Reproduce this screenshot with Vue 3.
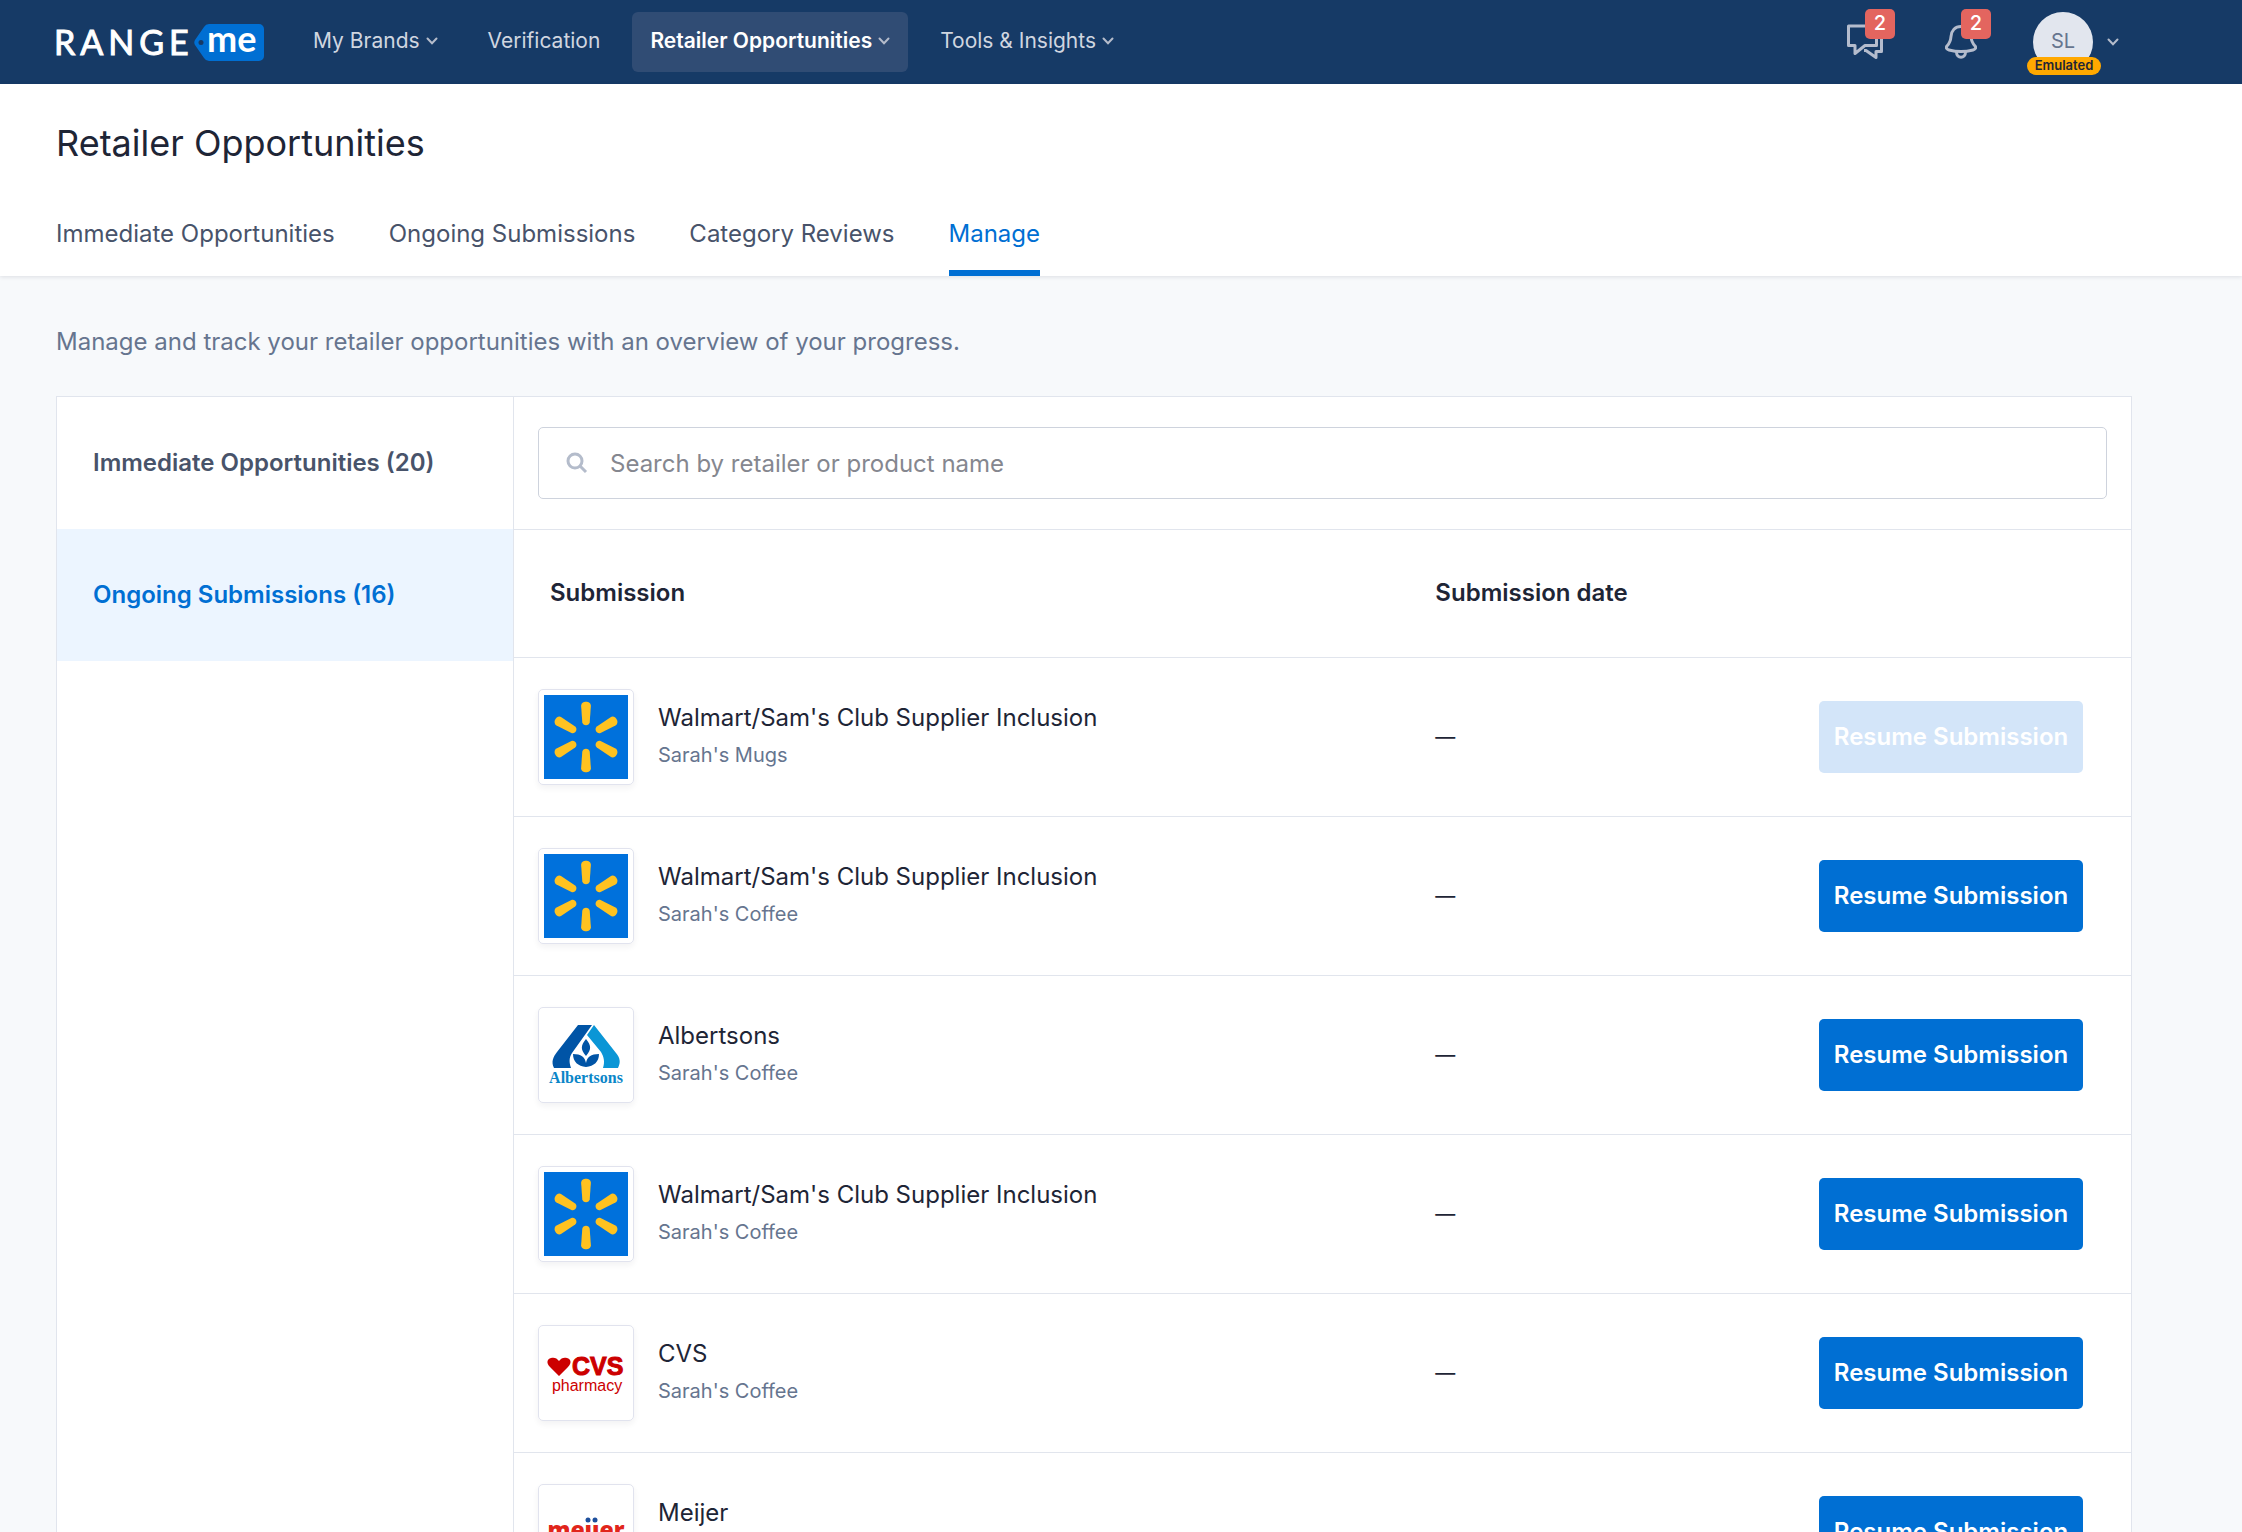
<script setup>
import { ref } from 'vue'

const search = ref('')

const navItems = [
  { label: 'My Brands', menu: true },
  { label: 'Verification', menu: false },
  { label: 'Retailer Opportunities', menu: true, active: true },
  { label: 'Tools & Insights', menu: true },
]

const tabs = ['Immediate Opportunities', 'Ongoing Submissions', 'Category Reviews', 'Manage']
const activeTab = 'Manage'

const sections = [
  { label: 'Immediate Opportunities', count: 20 },
  { label: 'Ongoing Submissions', count: 16, active: true },
]

const submissions = [
  { id: 1, name: "Walmart/Sam's Club Supplier Inclusion", brand: "Sarah's Mugs", logo: 'walmart', disabled: true },
  { id: 2, name: "Walmart/Sam's Club Supplier Inclusion", brand: "Sarah's Coffee", logo: 'walmart' },
  { id: 3, name: 'Albertsons', brand: "Sarah's Coffee", logo: 'albertsons' },
  { id: 4, name: "Walmart/Sam's Club Supplier Inclusion", brand: "Sarah's Coffee", logo: 'walmart' },
  { id: 5, name: 'CVS', brand: "Sarah's Coffee", logo: 'cvs' },
  { id: 6, name: 'Meijer', brand: "Sarah's Coffee", logo: 'meijer' },
]

const rays = [0, 60, 120, 180, 240, 300]
</script>

<template>
  <div class="page">
    <header class="topbar">
      <a class="brand" href="#" aria-label="RangeMe">
        <svg width="208" height="36" viewBox="0 0 208 36">
          <path d="M153 0h50a5 5 0 0 1 5 5v27a5 5 0 0 1-5 5h-50a6 6 0 0 1-5-3l-9-13a5 5 0 0 1 0-5l9-13a6 6 0 0 1 5-3z" fill="#006fd3" />
          <circle cx="145" cy="18.500" r="2.500" fill="#163a66" />
          <text class="brand-range" x="-2" y="31" fill="#fff">RANGE</text>
          <text class="brand-me" x="151" y="28" fill="#fff">me</text>
        </svg>
      </a>

      <nav class="nav">
        <a v-for="item in navItems" :key="item.label" href="#" class="nav-item" :class="{ active: item.active }">
          {{ item.label }}
          <svg v-if="item.menu" class="chevron" width="12" height="8" viewBox="0 0 12 8">
            <path d="M1.500 1.500 6 6.200l4.500-4.700" />
          </svg>
        </a>
      </nav>

      <div class="tools">
        <button class="tool" type="button" aria-label="Messages">
          <svg width="36" height="36" viewBox="0 0 36 36">
            <path d="M1.500 2h28v19.500H18l-10 8v-8H1.500z" />
            <path d="M34.500 12v15.500h-5.500v6l-10-7h-2" />
          </svg>
          <span class="badge">2</span>
        </button>
        <button class="tool bell" type="button" aria-label="Notifications">
          <svg width="32" height="36" viewBox="0 0 32 36">
            <path d="M16 2.500c-6 0-9.500 4-10 10-.4 5-1.500 7-4 9.500-1.500 2 0 3.500 2 4 7.500 2 16.500 2 24 0 2-.5 3.500-2 2-4-2.500-2.500-3.600-4.500-4-9.500-.5-6-4-10-10-10z" />
            <path d="M11.500 28c0 7 9 7 9 0" />
          </svg>
          <span class="badge">2</span>
        </button>
        <button class="account" type="button" aria-label="Account">
          <span class="avatar">SL<span class="emulated">Emulated</span></span>
          <svg class="chevron" width="12" height="8" viewBox="0 0 12 8">
            <path d="M1.500 1.500 6 6.200l4.500-4.700" />
          </svg>
        </button>
      </div>
    </header>

    <div class="heading">
      <h1>Retailer Opportunities</h1>
      <nav class="tabs">
        <a v-for="tab in tabs" :key="tab" href="#" class="tab" :class="{ active: tab === activeTab }">{{ tab }}</a>
      </nav>
    </div>

    <main class="content">
      <p class="intro">Manage and track your retailer opportunities with an overview of your progress.</p>

      <div class="card">
        <aside class="side">
          <a v-for="s in sections" :key="s.label" href="#" class="side-item" :class="{ active: s.active }">{{ s.label }} ({{ s.count }})</a>
        </aside>

        <section class="panel">
          <div class="search-area">
            <label class="search">
              <svg width="22" height="22" viewBox="0 0 22 22">
                <circle cx="9" cy="9" r="7" />
                <path d="m14 14 6 6" />
              </svg>
              <input v-model="search" type="text" aria-label="Search" placeholder="Search by retailer or product name" />
            </label>
          </div>

          <table class="list">
            <colgroup>
              <col class="col-name" />
              <col class="col-date" />
              <col />
            </colgroup>
            <thead>
              <tr>
                <th scope="col">Submission</th>
                <th scope="col" class="date">Submission date</th>
                <th></th>
              </tr>
            </thead>
            <tbody>
              <tr v-for="row in submissions" :key="row.id">
                <td>
                  <div class="retailer">
                    <span class="logo">
                      <svg v-if="row.logo === 'walmart'" width="84" height="84" viewBox="0 0 86 86">
                        <rect width="86" height="86" fill="#0071dc" />
                        <path
                          v-for="angle in rays"
                          :key="angle"
                          :transform="`rotate(${angle} 43 43)`"
                          d="M38 11c0-5.600 10-5.600 10 0l-1.200 17c-.5 4-7.100 4-7.600 0z"
                          fill="#ffc220"
                        />
                      </svg>
                      <svg v-else-if="row.logo === 'albertsons'" width="84" height="84" viewBox="0 0 84 84">
                        <path d="M34 12h14L28 40c-3 5-3 9-1 15H10c-3-6-1-11 3-16z" fill="#0054a6" />
                        <path d="M50 12 72 40c4 5 5 9 2 15H59c2-6 1-11-2-16L43 22z" fill="#0a96d6" />
                        <path d="M42 26c5 6 6 10 0 17-6-7-5-11 0-17zM29 41c8 0 12 3 13 9 1-6 5-9 13-9 0 8-5 12-13 13-8-1-13-5-13-13z" fill="#0054a6" />
                        <text class="logo-albertsons" x="42" y="70" text-anchor="middle" fill="#0a86c8">Albertsons</text>
                      </svg>
                      <svg v-else-if="row.logo === 'cvs'" width="84" height="84" viewBox="0 0 84 84">
                        <path d="m15 45-9-9c-4-4-3-8 1-9 3-1 6 0 8 3 2-3 5-4 8-3 4 1 5 5 1 9z" fill="#cc0000" />
                        <text class="logo-cvs" x="28" y="44" fill="#cc0000" stroke="#cc0000">CVS</text>
                        <text class="logo-pharmacy" x="43" y="60" text-anchor="middle" fill="#cc0000">pharmacy</text>
                      </svg>
                      <svg v-else width="84" height="84" viewBox="0 0 84 84">
                        <text class="logo-meijer" x="42" y="48" text-anchor="middle" fill="#e1251b">meıȷer</text>
                        <circle cx="44" cy="30" r="2.500" fill="#1d4f9c" />
                        <circle cx="51" cy="30" r="2.500" fill="#1d4f9c" />
                      </svg>
                    </span>
                    <div class="about">
                      <div class="name">{{ row.name }}</div>
                      <div class="sub">{{ row.brand }}</div>
                    </div>
                  </div>
                </td>
                <td class="date">—</td>
                <td class="action">
                  <button type="button" class="resume" :disabled="row.disabled">Resume Submission</button>
                </td>
              </tr>
            </tbody>
          </table>
        </section>
      </div>
    </main>
  </div>
</template>

<style>
body {
  margin: 0;
  background: #f7f9fb;
}
</style>

<style scoped>
.page {
  height: 100vh;
  overflow: hidden;
  background: #f7f9fb;
  font-family: Inter, 'Liberation Sans', sans-serif;
  font-size: 24px;
  line-height: 32px;
  color: #1e2536;
}
.page * {
  box-sizing: border-box;
}
a {
  color: inherit;
  text-decoration: none;
}
button {
  font: inherit;
  border: 0;
  padding: 0;
  cursor: pointer;
}

.topbar {
  display: flex;
  align-items: center;
  height: 84px;
  padding: 0 123px 0 56px;
  background: #163a66;
}
.brand {
  display: flex;
}
.brand svg {
  overflow: visible;
}
.brand-range {
  font: 400 34px Lato, sans-serif;
  letter-spacing: 5px;
  stroke: #fff;
  stroke-width: 1px;
}
.brand-me {
  font: 700 36px Lato, sans-serif;
}
.nav {
  display: flex;
  gap: 14px;
  margin-left: 31px;
  font-size: 21px;
}
.nav-item {
  display: flex;
  align-items: center;
  gap: 6px;
  height: 60px;
  padding: 0 18px;
  padding-bottom: 2px;
  border-radius: 6px;
  color: #d0d6e0;
  white-space: nowrap;
}
.nav-item.active {
  background: #304c74;
  color: #fff;
  font-weight: 600;
}
.chevron {
  fill: none;
  stroke: #b5bccb;
  stroke-width: 2;
  stroke-linecap: round;
}
.tools {
  display: flex;
  align-items: center;
  margin-left: auto;
}
.tool {
  position: relative;
  display: flex;
  background: none;
}
.tool svg {
  fill: none;
  stroke: #b4bccd;
  stroke-width: 3;
  stroke-linejoin: round;
}
.bell {
  margin-left: 62px;
}
.badge {
  position: absolute;
  top: -15px;
  left: 18px;
  width: 30px;
  height: 30px;
  border-radius: 5px;
  background: #e3655f;
  color: #fff;
  font-size: 20px;
  font-weight: 500;
  line-height: 29px;
}
.bell .badge {
  left: 16px;
}
.account {
  display: flex;
  align-items: center;
  gap: 14px;
  margin-left: 56px;
  background: none;
}
.avatar {
  position: relative;
  width: 60px;
  height: 60px;
  border-radius: 50%;
  background: #e2e6ee;
  color: #66758f;
  font-size: 20px;
  line-height: 58px;
}
.emulated {
  position: absolute;
  bottom: -3px;
  left: -6px;
  width: 74px;
  height: 18px;
  border-radius: 9px;
  background: #ffa800;
  color: #1e2536;
  font-size: 13px;
  font-weight: 600;
  line-height: 17px;
}

.heading {
  position: relative;
  padding: 39px 56px 0;
  background: #fff;
  box-shadow: 0 1px 4px rgba(30, 37, 54, 0.12);
}
h1 {
  margin: 0;
  font-size: 36px;
  font-weight: 400;
  line-height: 40px;
}
.tabs {
  display: flex;
  gap: 54px;
  margin-top: 55px;
}
.tab {
  height: 58px;
  color: #48536a;
}
.tab.active {
  border-bottom: 6px solid #006fd3;
  color: #006fd3;
}

.content {
  padding: 50px 110px 48px 56px;
}
.intro {
  margin: 0 0 38px;
  color: #66758f;
}
.card {
  display: flex;
  border: 1px solid #e1e5ed;
  background: #fff;
}
.side {
  flex: 0 0 457px;
  border-right: 1px solid #e1e5ed;
}
.side-item {
  display: flex;
  align-items: center;
  height: 132px;
  padding-left: 36px;
  color: #48536a;
  font-weight: 600;
}
.side-item.active {
  background: #ecf5ff;
  color: #006fd3;
}
.panel {
  flex: 1;
  min-width: 0;
}
.search-area {
  padding: 30px 24px;
  border-bottom: 1px solid #e1e5ed;
}
.search {
  display: flex;
  align-items: center;
  gap: 22px;
  height: 72px;
  padding: 0 27px;
  border: 1px solid #ced3dd;
  border-radius: 5px;
}
.search svg {
  fill: none;
  stroke: #b4bccb;
  stroke-width: 3;
}
.search input {
  flex: 1;
  height: 60px;
  padding: 0;
  border: 0;
  outline: 0;
  background: none;
  font: inherit;
}
.search input::placeholder {
  color: #85878f;
  opacity: 1;
}

.list {
  width: 100%;
  table-layout: fixed;
  border-collapse: collapse;
}
.col-name {
  width: 55%;
}
.col-date {
  width: 23%;
}
th {
  height: 127px;
  padding: 0 36px;
  text-align: left;
  font-weight: 600;
}
td {
  height: 159px;
  padding: 0 24px;
}
tr {
  border-bottom: 1px solid #e1e5ed;
}
.date {
  padding-left: 32px;
}
td.date {
  font-size: 20px;
}
td.action {
  padding-right: 48px;
  text-align: right;
}
.retailer {
  display: flex;
  align-items: center;
  gap: 24px;
}
.logo {
  width: 96px;
  height: 96px;
  padding: 5px;
  border: 1px solid #e1e3ee;
  border-radius: 5px;
  box-shadow: 0 3px 6px rgba(30, 37, 54, 0.06);
}
.logo svg {
  display: block;
}
.about {
  padding-bottom: 4px;
}
.name {
  line-height: 40px;
}
.sub {
  color: #66758f;
  font-size: 20px;
  line-height: 34px;
}
.logo-albertsons {
  font: 700 16px 'Liberation Serif', serif;
}
.logo-cvs {
  font: 700 25px 'Liberation Sans', sans-serif;
  stroke-width: 1px;
}
.logo-pharmacy {
  font: 400 16px 'Liberation Sans', sans-serif;
}
.logo-meijer {
  font: 800 23px 'Open Sans', sans-serif;
}
.resume {
  width: 264px;
  height: 72px;
  border-radius: 5px;
  background: #006fd3;
  color: #fff;
  font-weight: 600;
  white-space: nowrap;
}
.resume:disabled {
  background: #d3e5f9;
}
</style>
